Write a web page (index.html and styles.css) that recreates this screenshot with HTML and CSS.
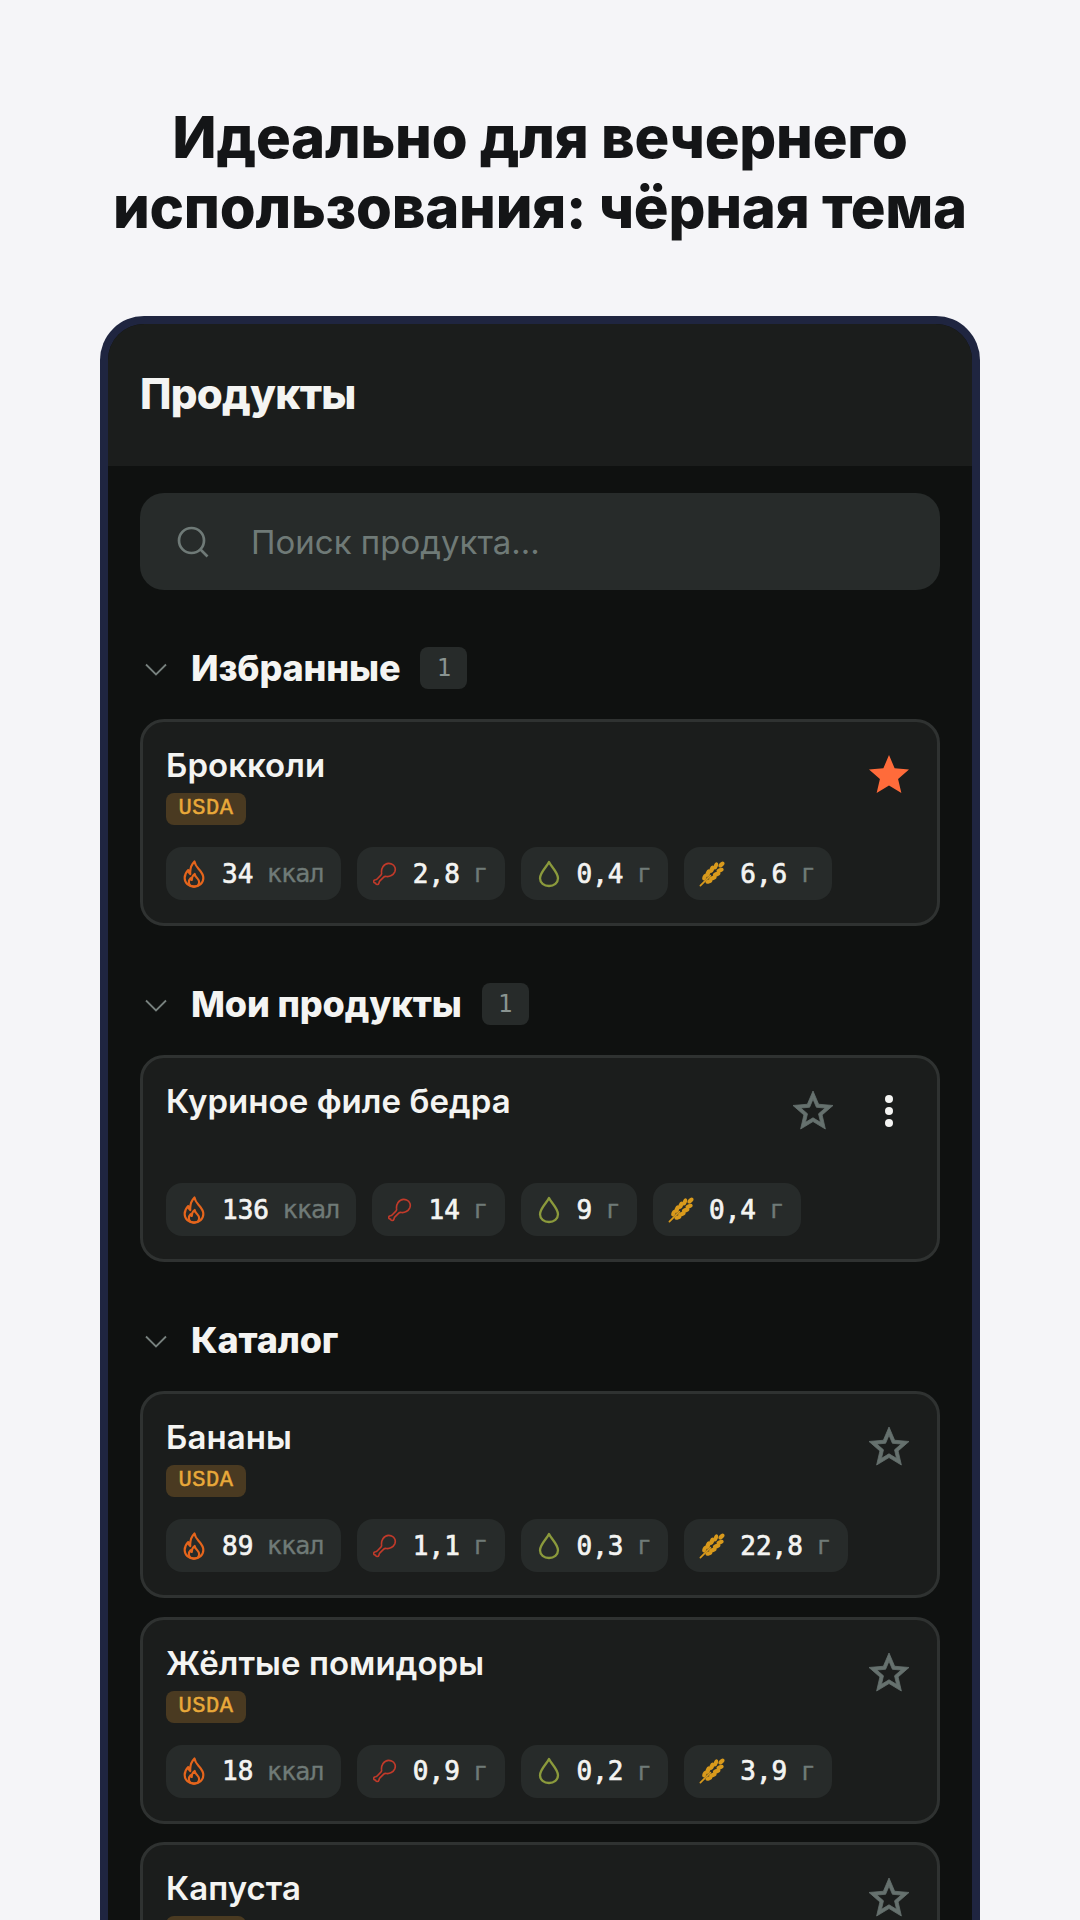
FILE: index.html
```html
<!DOCTYPE html>
<html lang="ru">
<head>
<meta charset="utf-8">
<title>Продукты</title>
<link rel="stylesheet" href="styles.css">
</head>
<body>
<svg class="defs" width="0" height="0" aria-hidden="true">
  <defs>
    <symbol id="flame" viewBox="0 0 24 30">
      <path d="M12.500 1.500c.6 4.200 2.600 6 5 8.700 2.400 2.700 4.500 5.300 4.500 9 0 5.400-4.400 9.300-10 9.300S2 24.600 2 19.300c0-3.700 1.700-6.300 3.800-8.500.2 2 .8 3.300 2.200 4.200C7.600 10 9 5 12.500 1.500Z" fill="none" stroke="currentColor" stroke-width="2.300" stroke-linejoin="round"/>
      <path d="M12.700 15c.3 2.300 1.500 3.200 2.700 4.400 1.300 1.400 2.100 2.500 2.100 4.100 0 2.900-2.500 5-5.500 5s-5.500-2.100-5.500-5c0-1.700.8-3 1.800-4 .2.900.6 1.500 1.300 1.900-.2-2.300.8-4.600 3.100-6.400Z" fill="none" stroke="currentColor" stroke-width="2.300" stroke-linejoin="round"/>
    </symbol>
    <symbol id="leg" viewBox="0 0 28 28">
      <path d="M11.500 5.500C13.800 2.400 18 .9 21.700 2.300c3.800 1.400 5.200 5.600 3.700 9.200-1.700 3.800-6 6-9.800 5.400-1.300-.2-2.300 0-3.100.8l-4.700 4.700c-.6.600-.6 1.300-.8 2-.3 1.100-1.300 2-2.500 1.800-1-.1-1.500-.9-1.500-1.700-.9.200-2-.3-2.200-1.400-.2-1.300.8-2.300 2-2.400.7-.1 1.400-.3 2-.9l4.400-4.400c.8-.8 1-1.800.8-3-.3-2.200.1-4.500 1.500-6.500Z" fill="none" stroke="currentColor" stroke-width="1.900" stroke-linejoin="round"/>
    </symbol>
    <symbol id="drop" viewBox="0 0 22 28">
      <path d="M11 2c2 4.400 9 10.300 9 16.200 0 4.500-4 7.800-9 7.800s-9-3.300-9-7.800C2 12.300 9 6.400 11 2Z" fill="none" stroke="currentColor" stroke-width="2.300" stroke-linejoin="round"/>
    </symbol>
    <symbol id="wheat" viewBox="0 0 28 28">
      <g transform="translate(15 13) rotate(45)" fill="currentColor">
        <rect x="-.9" y="3" width="1.800" height="17" rx=".9"/>
        <ellipse cx="0" cy="-13" rx="2.400" ry="3.800"/>
        <ellipse cx="-3.300" cy="-7.600" rx="2.200" ry="4" transform="rotate(-24 -3.300 -7.600)"/>
        <ellipse cx="3.300" cy="-7.600" rx="2.200" ry="4" transform="rotate(24 3.300 -7.600)"/>
        <ellipse cx="-3.700" cy="-2" rx="2.400" ry="4.200" transform="rotate(-24 -3.700 -2)"/>
        <ellipse cx="3.700" cy="-2" rx="2.400" ry="4.200" transform="rotate(24 3.700 -2)"/>
        <ellipse cx="-3.700" cy="3.800" rx="2.400" ry="4.200" transform="rotate(-24 -3.700 3.800)"/>
        <ellipse cx="3.700" cy="3.800" rx="2.400" ry="4.200" transform="rotate(24 3.700 3.800)"/>
        <ellipse cx="-3.300" cy="9.400" rx="2.200" ry="3.800" transform="rotate(-24 -3.300 9.400)"/>
        <ellipse cx="3.300" cy="9.400" rx="2.200" ry="3.800" transform="rotate(24 3.300 9.400)"/>
      </g>
    </symbol>
    <symbol id="star-solid" viewBox="0 0 24 24">
      <path d="M12 17.270 18.180 21l-1.640-7.030L22 9.240l-7.190-.61L12 2 9.190 8.630 2 9.240l5.460 4.730L5.820 21z"/>
    </symbol>
    <symbol id="star-line" viewBox="0 0 24 24">
      <path d="M22 9.240l-7.190-.62L12 2 9.190 8.630 2 9.240l5.460 4.730L5.820 21 12 17.270 18.180 21l-1.630-7.030L22 9.240zM12 15.400l-3.760 2.270 1-4.280-3.320-2.880 4.380-.38L12 6.100l1.710 4.040 4.380.38-3.320 2.880 1 4.280L12 15.400z"/>
    </symbol>
    <symbol id="chev" viewBox="0 0 22 13">
      <path d="M1 1.500 11 11.500 21 1.500" fill="none" stroke="currentColor" stroke-width="1.800"/>
    </symbol>
  </defs>
</svg>

<main class="page">
  <h1 class="headline">Идеально для вечернего<br>использования: чёрная тема</h1>

  <section class="phone">
    <header class="appbar"><h2 class="appbar-title">Продукты</h2></header>
    <div class="content">
      <div class="search">
        <svg class="search-icon" viewBox="0 0 32 32" aria-hidden="true"><circle cx="14.500" cy="14.500" r="12.500" fill="none" stroke="currentColor" stroke-width="2.700"/><path d="M23.500 23.500 30.500 30.500" fill="none" stroke="currentColor" stroke-width="2.700"/></svg>
        <span class="search-text">Поиск продукта...</span>
      </div>

      <div class="section-head">
        <svg class="chev"><use href="#chev"/></svg>
        <h3 class="section-title">Избранные</h3>
        <span class="count">1</span>
      </div>
      <article class="card">
        <div class="card-top">
          <div class="card-info"><div class="name">Брокколи</div><span class="tag">USDA</span></div>
          <div class="actions"><svg class="star star-on"><use href="#star-solid"/></svg></div>
        </div>
        <div class="chips">
          <span class="chip"><svg class="ic ic-flame"><use href="#flame"/></svg><b class="val">34</b><i class="unit">ккал</i></span>
          <span class="chip"><svg class="ic ic-leg"><use href="#leg"/></svg><b class="val">2,8</b><i class="unit">г</i></span>
          <span class="chip"><svg class="ic ic-drop"><use href="#drop"/></svg><b class="val">0,4</b><i class="unit">г</i></span>
          <span class="chip"><svg class="ic ic-wheat"><use href="#wheat"/></svg><b class="val">6,6</b><i class="unit">г</i></span>
        </div>
      </article>

      <div class="section-head">
        <svg class="chev"><use href="#chev"/></svg>
        <h3 class="section-title">Мои продукты</h3>
        <span class="count">1</span>
      </div>
      <article class="card">
        <div class="card-top">
          <div class="card-info"><div class="name">Куриное филе бедра</div></div>
          <div class="actions">
            <svg class="star star-off"><use href="#star-line"/></svg>
            <span class="more"><i></i><i></i><i></i></span>
          </div>
        </div>
        <div class="chips">
          <span class="chip"><svg class="ic ic-flame"><use href="#flame"/></svg><b class="val">136</b><i class="unit">ккал</i></span>
          <span class="chip"><svg class="ic ic-leg"><use href="#leg"/></svg><b class="val">14</b><i class="unit">г</i></span>
          <span class="chip"><svg class="ic ic-drop"><use href="#drop"/></svg><b class="val">9</b><i class="unit">г</i></span>
          <span class="chip"><svg class="ic ic-wheat"><use href="#wheat"/></svg><b class="val">0,4</b><i class="unit">г</i></span>
        </div>
      </article>

      <div class="section-head">
        <svg class="chev"><use href="#chev"/></svg>
        <h3 class="section-title">Каталог</h3>
      </div>
      <div class="list">
        <article class="card">
          <div class="card-top">
            <div class="card-info"><div class="name">Бананы</div><span class="tag">USDA</span></div>
            <div class="actions"><svg class="star star-off"><use href="#star-line"/></svg></div>
          </div>
          <div class="chips">
            <span class="chip"><svg class="ic ic-flame"><use href="#flame"/></svg><b class="val">89</b><i class="unit">ккал</i></span>
            <span class="chip"><svg class="ic ic-leg"><use href="#leg"/></svg><b class="val">1,1</b><i class="unit">г</i></span>
            <span class="chip"><svg class="ic ic-drop"><use href="#drop"/></svg><b class="val">0,3</b><i class="unit">г</i></span>
            <span class="chip"><svg class="ic ic-wheat"><use href="#wheat"/></svg><b class="val">22,8</b><i class="unit">г</i></span>
          </div>
        </article>
        <article class="card">
          <div class="card-top">
            <div class="card-info"><div class="name">Жёлтые помидоры</div><span class="tag">USDA</span></div>
            <div class="actions"><svg class="star star-off"><use href="#star-line"/></svg></div>
          </div>
          <div class="chips">
            <span class="chip"><svg class="ic ic-flame"><use href="#flame"/></svg><b class="val">18</b><i class="unit">ккал</i></span>
            <span class="chip"><svg class="ic ic-leg"><use href="#leg"/></svg><b class="val">0,9</b><i class="unit">г</i></span>
            <span class="chip"><svg class="ic ic-drop"><use href="#drop"/></svg><b class="val">0,2</b><i class="unit">г</i></span>
            <span class="chip"><svg class="ic ic-wheat"><use href="#wheat"/></svg><b class="val">3,9</b><i class="unit">г</i></span>
          </div>
        </article>
        <article class="card">
          <div class="card-top">
            <div class="card-info"><div class="name">Капуста</div><span class="tag">USDA</span></div>
            <div class="actions"><svg class="star star-off"><use href="#star-line"/></svg></div>
          </div>
        </article>
      </div>
    </div>
  </section>
</main>
</body>
</html>
```

FILE: styles.css
```css
* { box-sizing: border-box; }
html, body { margin: 0; height: 1920px; overflow: hidden; }
body { background: #f5f5f8; font-family: Inter, "Noto Sans", sans-serif; color: #f4f4f2; }
.defs { position: absolute; }
.page { display: flex; flex-direction: column; align-items: center; height: 1920px; overflow: hidden; padding-top: 102px; }
.headline { margin: 0 0 74px; color: #141517; font-size: 58px; line-height: 70px; font-weight: 800; text-align: center; letter-spacing: -0.250px; }
.phone { width: 880px; flex: none; height: 1604px; border: 8px solid #1f2540; border-bottom: 0; border-radius: 44px 44px 0 0; background: #0f1110; overflow: hidden; }
.appbar { height: 142px; background: #1b1d1c; display: flex; align-items: center; padding: 0 32px; }
.appbar-title { margin: 0; font-size: 42px; font-weight: 800; padding-bottom: 4px; letter-spacing: -0.750px; }
.content { padding: 27px 32px 0; }
.search { height: 97px; border-radius: 24px; background: #272b2a; display: flex; align-items: center; padding-left: 37px; color: #6f7a77; }
.search-icon { width: 32px; height: 32px; margin-right: 42px; }
.search-text { font-size: 33px; }
.section-head { display: flex; align-items: center; height: 42px; margin: 57px 0 30px; }
.chev { width: 22px; height: 13px; color: #77817e; margin-left: 5px; margin-right: 24px; margin-top: 2px; }
.section-title { margin: 0; font-size: 36px; font-weight: 800; letter-spacing: -0.150px; }
.count { margin-left: 20px; width: 47px; height: 42px; border-radius: 8px; background: #272b2a; color: #8a9491; font: 24px "DejaVu Sans Mono", monospace; display: flex; align-items: center; justify-content: center; }
.list { display: flex; flex-direction: column; gap: 18.500px; }
.card { height: 207px; flex: none; border: 3px solid #2f3231; border-radius: 24px; background: #1b1d1c; padding: 22px 24px 0 23px; display: flex; flex-direction: column; }
.card-top { display: flex; justify-content: space-between; height: 103px; flex: none; }
.card-info { display: flex; flex-direction: column; align-items: flex-start; }
.name { font-size: 33px; line-height: 42px; font-weight: 600; letter-spacing: 0.050px; }
.tag { margin-top: 7px; height: 32px; width: 80px; border-radius: 8px; background: #4a3a21; color: #e9a93a; font: 400 22px/32px "Liberation Mono", monospace; -webkit-text-stroke: 0.500px #e9a93a; letter-spacing: 0.600px; text-align: center; }
.actions { display: flex; align-items: flex-start; gap: 28px; padding-top: 7px; }
.star { width: 48px; height: 48px; flex: none; }
.star-on { fill: #ff6b3a; }
.star-off { fill: #66716e; stroke: #66716e; stroke-width: 0.400px; }
.more { width: 48px; height: 48px; display: flex; flex-direction: column; align-items: center; justify-content: center; gap: 4.300px; }
.more i { width: 8px; height: 8px; border-radius: 50%; background: #f4f4f2; }
.chips { display: flex; gap: 16px; }
.chip { height: 53px; border-radius: 16px; background: #272b2a; display: inline-flex; align-items: center; padding: 0 17px 0 16px; }
.ic { width: 24px; height: 28px; flex: none; margin-right: 16px; }
.ic-flame { color: #e5651c; }
.ic-leg { color: #c23a2a; }
.ic-drop { color: #8b9a3c; }
.ic-wheat { color: #d99a1c; width: 26px; margin-left: -1px; margin-right: 15px; }
.val { font: 400 26px "DejaVu Sans Mono", monospace; color: #f4f4f2; -webkit-text-stroke: 0.700px #f4f4f2; margin-right: 13.500px; }
.unit { font: normal 25px "DejaVu Sans Mono", monospace; letter-spacing: -0.800px; color: #6f7a77; -webkit-text-stroke: 0.300px #6f7a77; }
```
